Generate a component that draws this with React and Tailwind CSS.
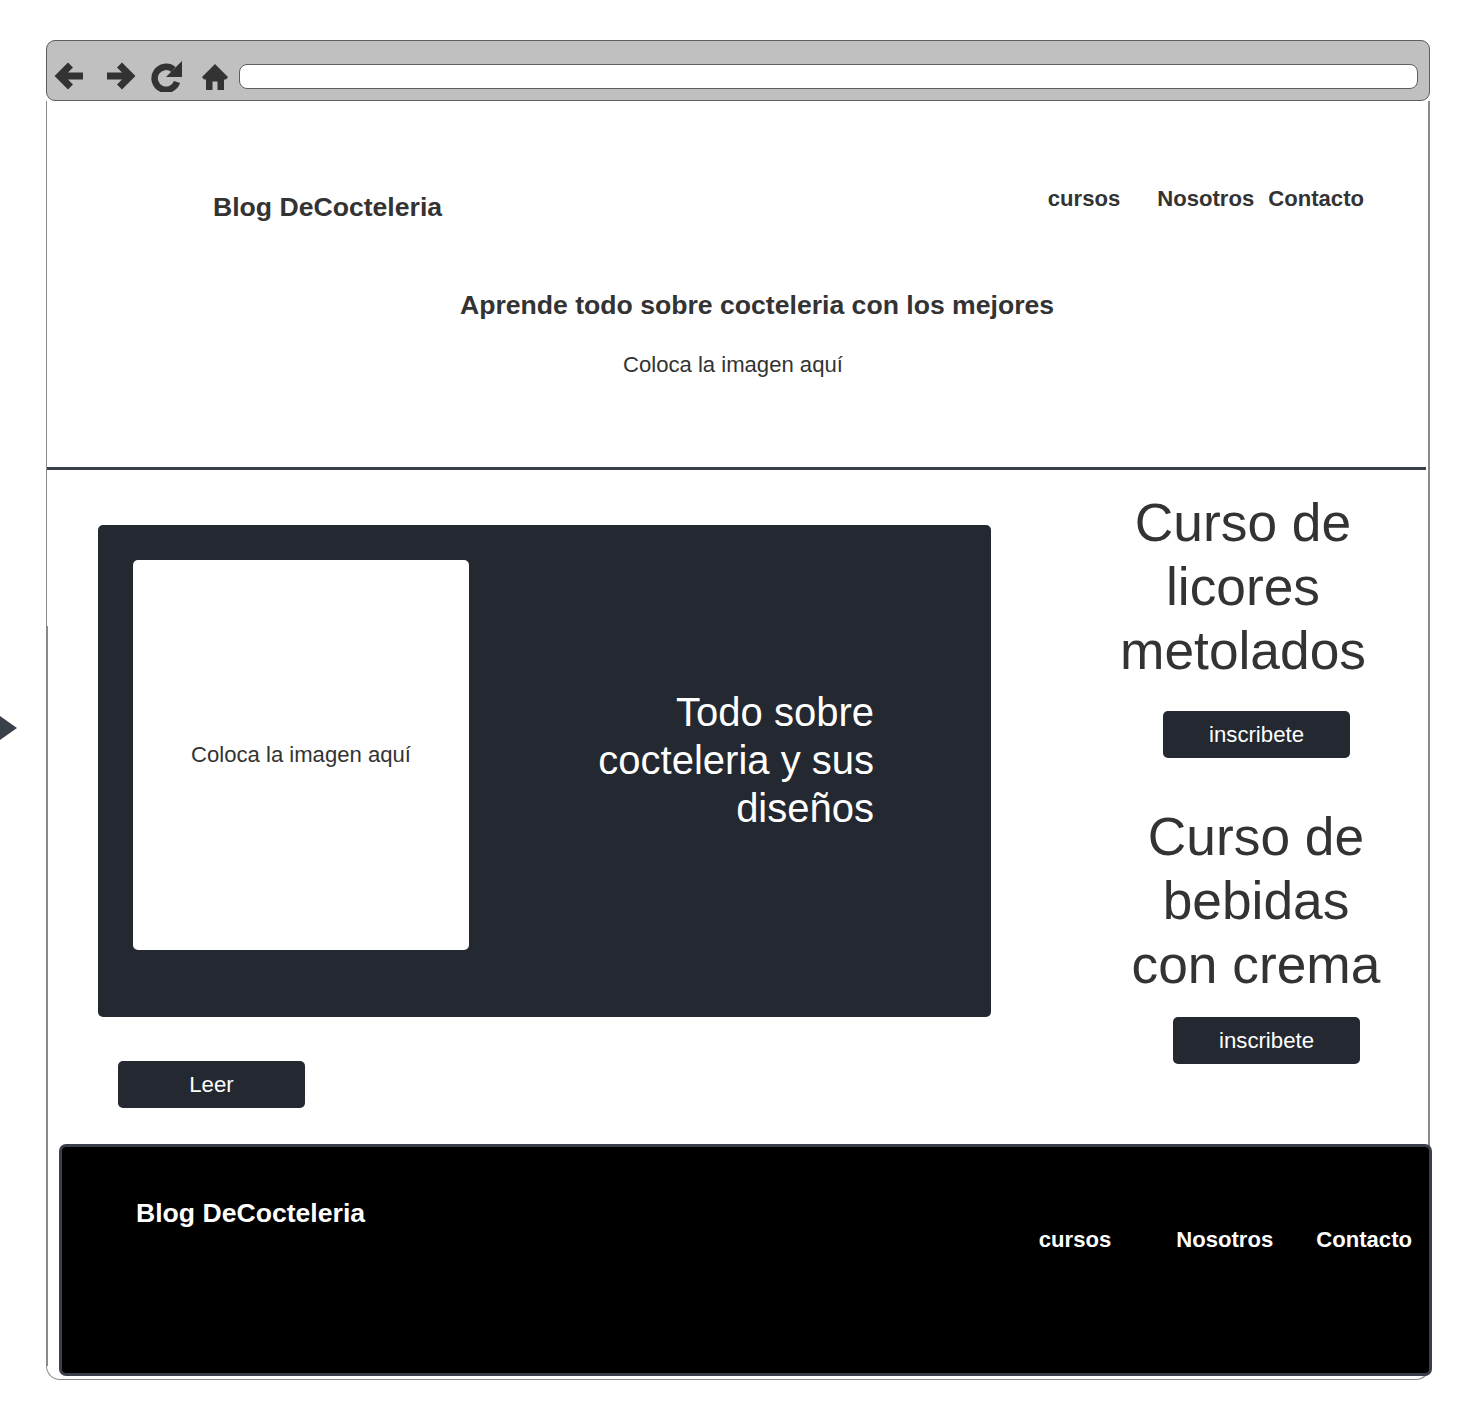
import React from 'react';

function ToolbarIcons() {
  return (
    <div className="flex items-center shrink-0 ml-[7px] mt-[10px]">
      <svg width="30" height="30" viewBox="0 0 30 30" className="text-[#333333]">
        <path d="M29 15H7M16.5 4 5.5 15 16.5 26" fill="none" stroke="currentColor" strokeWidth="7" />
      </svg>
      <svg width="30" height="30" viewBox="0 0 30 30" className="ml-[22px] text-[#333333]">
        <path d="M1 15H23M13.5 4 24.5 15 13.5 26" fill="none" stroke="currentColor" strokeWidth="7" />
      </svg>
      <svg width="32" height="32" viewBox="0 0 32 32" className="ml-[15px] text-[#333333]">
        <path d="M22.5 9.5A11.5 11.5 0 1 0 26 22" fill="none" stroke="currentColor" strokeWidth="6.5" />
        <path d="M31 1V17H15Z" fill="currentColor" />
      </svg>
      <svg width="28" height="28" viewBox="0 0 28 28" className="ml-[18px] mt-[2px] text-[#333333]">
        <path d="M14 1 27 14 25 16.5H23V27H16.5V18.5H11.5V27H5V16.5H3L1 14Z" fill="currentColor" />
      </svg>
    </div>
  );
}

function DarkButton({ label, className }) {
  return (
    <button className={`w-[187px] h-[47px] rounded-[5px] bg-[#242831] text-white text-[22.2px] ${className}`}>
      {label}
    </button>
  );
}

function App() {
  return (
    <div className="relative h-[1416px] bg-white overflow-hidden font-['Liberation_Sans',Arial,sans-serif] text-[#333333]">
      {/* triangulo lateral */}
      <div className="absolute left-0 top-[716px] w-0 h-0 border-y-[12px] border-y-transparent border-l-[17px] border-l-[#3a414a]" />
      {/* linea mas oscura del borde izquierdo */}
      <div className="absolute left-[47px] top-[626px] w-px h-[740px] bg-[#8a8a8a]" />

      <div className="ml-[46px] mt-[40px] w-[1384px]">
        {/* barra del navegador */}
        <div className="flex items-center h-[61px] bg-[#c0c0c0] border border-[#5e5e5e] rounded-[9px]">
          <ToolbarIcons />
          <div className="ml-[10px] mt-[11px] w-[1179px] h-[25px] bg-white border border-[#5e5e5e] rounded-[8px]" />
        </div>

        <div className="h-[1279px] border-l border-r-2 border-b border-[#8a8a8a] rounded-b-[14px]">
          {/* cabecera */}
          <div className="flex items-start font-bold h-[104px]">
            <div className="ml-[166px] mt-[89px] text-[26.6px] leading-[34px]">Blog DeCocteleria</div>
            <div className="flex ml-auto mr-[64px] mt-[84px] text-[22.1px] leading-[28px]">
              <span>cursos</span>
              <span className="ml-[37px]">Nosotros</span>
              <span className="ml-[14px]">Contacto</span>
            </div>
          </div>

          <h1 className="mt-[83px] ml-[413px] font-bold text-[26.6px] leading-[34px]">
            Aprende todo sobre cocteleria con los mejores
          </h1>
          <p className="mt-[29px] ml-[576px] text-[22.1px] leading-[28px]">Coloca la imagen aquí</p>

          <div className="mt-[88px] w-[1379px] h-[3px] bg-[#3a3f4a]" />

          {/* contenido */}
          <div className="flex h-[674px]">
            <div className="ml-[51px] mt-[55px] w-[893px]">
              <div className="flex h-[492px] p-[35px] rounded-[5px] bg-[#242831]">
                <div className="flex items-center justify-center w-[336px] h-[390px] bg-white rounded-[5px] text-[22.1px]">
                  Coloca la imagen aquí
                </div>
                <h2 className="ml-auto mr-[82px] mt-[128px] w-[300px] text-right text-white text-[40px] leading-[48px] font-normal">
                  Todo sobre cocteleria y sus diseños
                </h2>
              </div>
              <DarkButton label="Leer" className="mt-[44px] ml-[20px]" />
            </div>

            <div className="flex flex-col items-start w-[400px] mt-[21px]">
              <h2 className="ml-[117px] w-[270px] text-center text-[53.3px] leading-[64px] font-normal">
                Curso de licores metolados
              </h2>
              <DarkButton label="inscribete" className="mt-[28px] ml-[172px]" />
              <h2 className="mt-[47px] ml-[122px] w-[286px] text-center text-[53.3px] leading-[64px] font-normal">
                Curso de bebidas con crema
              </h2>
              <DarkButton label="inscribete" className="mt-[20px] ml-[182px]" />
            </div>
          </div>

          {/* pie */}
          <div className="flex items-start -mr-[4px] ml-[12px] h-[232px] bg-black border-[3px] border-[#3a3f4a] rounded-[7px] text-white font-bold">
            <div className="ml-[74px] mt-[49px] text-[26.6px] leading-[34px]">Blog DeCocteleria</div>
            <div className="flex ml-auto mr-[17px] mt-[79px] text-[22.1px] leading-[28px]">
              <span>cursos</span>
              <span className="ml-[65px]">Nosotros</span>
              <span className="ml-[43px]">Contacto</span>
            </div>
          </div>
        </div>
      </div>
    </div>
  );
}

export default App;
